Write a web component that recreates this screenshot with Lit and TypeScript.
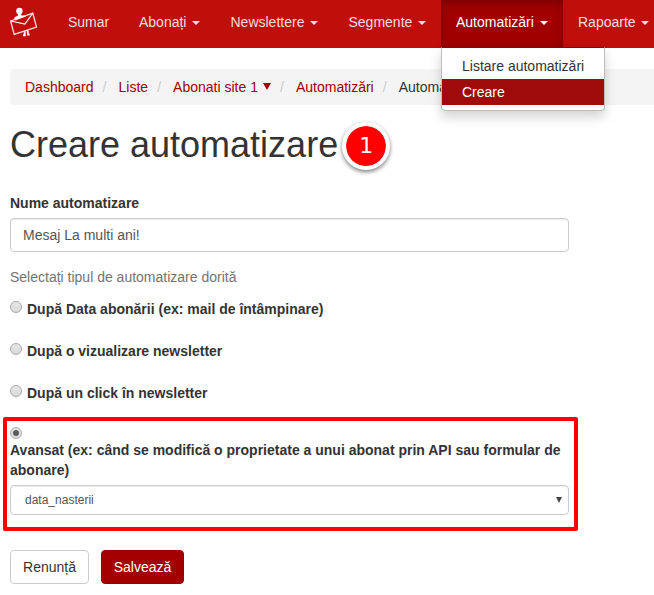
import { LitElement, html, css, svg } from "lit";
import { customElement, property } from "lit/decorators.js";

interface NavItem {
  label: string;
  menu?: string[];
  open?: boolean;
  width: number;
}

const NAV: NavItem[] = [
  { label: "Sumar", width: 71 },
  { label: "Abonați", menu: [], width: 91.5 },
  { label: "Newslettere", menu: [], width: 118 },
  { label: "Segmente", menu: [], width: 107.5 },
  { label: "Automatizări", menu: ["Listare automatizări", "Creare"], open: true, width: 122 },
  { label: "Rapoarte", menu: [], width: 102 },
];

@customElement("brand-logo")
class BrandLogo extends LitElement {
  static styles = css`
    :host { display: block; width: 30px; height: 30px; }
    svg { display: block; }
  `;
  render() {
    return html`<svg width="30" height="30" viewBox="0 0 30 30" fill="none" stroke="#fff">
      ${svg`
        <path d="M1.600 14 23.800 6.200 27.500 20 5.200 27.300Z" stroke-width="1.300" stroke-opacity=".88"/>
        <path d="M1.800 14 15.900 17.100 23.700 6.300" stroke-width="1.100"/>
        <circle cx="10.400" cy="4" r="3.200" fill="#fff" stroke="none"/>
        <path d="M8.900 6h3.200l.3 2.400 4 .2v1.200L6 13.400 5.200 11c1-1.700 2.900-1.500 3.700-2.500Z" fill="#fff" stroke="none"/>
        <path d="M15.700 24.300v3.900h-1.800M18.600 23.500l.4 4h1.600" stroke-width="1.900"/>
      `}
    </svg>`;
  }
}

@customElement("nav-bar")
class NavBar extends LitElement {
  static styles = css`
    :host { display: flex; height: 48px; background: #bf0e0c; padding-left: 9px; box-sizing: border-box; }
    brand-logo { margin: 7px 5px 0 0; flex: none; }
    .bar { display: flex; flex: none; padding-left: 9px; }
    .item { position: relative; flex: none; box-sizing: border-box; height: 48px; padding-left: 15px; line-height: 44px; color: #f0dede; white-space: nowrap; }
    .item.open { background: #a00000; color: #fff; box-shadow: inset 0 3px 9px rgba(0, 0, 0, 0.25); }
    .caret { display: inline-block; vertical-align: middle; margin-left: 2px; border: 4px solid transparent; border-top-color: currentColor; border-bottom: 0; }
    .menu { position: absolute; z-index: 2; top: 47px; left: 0; width: 164px; height: 64px; box-sizing: border-box; padding: 5px 0; background: #fff; border: 1px solid #bdbdbd; border-top-color: #930000; border-radius: 0 0 4px 4px; box-shadow: 0 6px 12px rgba(0, 0, 0, 0.175); line-height: 20px; color: #333; }
    .entry { padding: 3px 20px; }
    .entry.current { background: #9f0b0a; color: #fff; }
  `;
  render() {
    return html`
      <brand-logo></brand-logo>
      <div class="bar">
        ${NAV.map((n) => html`
          <div class="item ${n.open ? "open" : ""}" style="width:${n.width}px">${n.label}${n.menu ? html` <span class="caret"></span>` : ""}${n.open
            ? html`<div class="menu">${n.menu!.map((m) => html`<div class="entry ${m === "Creare" ? "current" : ""}">${m}</div>`)}</div>`
            : ""}</div>`)}
      </div>`;
  }
}

@customElement("radio-dot")
class RadioDot extends LitElement {
  @property({ type: Boolean }) on = false;
  static styles = css`
    :host { display: block; flex: none; width: 12px; height: 12px; }
    .dot { display: flex; align-items: center; justify-content: center; box-sizing: border-box; width: 12px; height: 12px; border: 1px solid #a9a9a9; border-radius: 50%; background: linear-gradient(#e6e6e6, #dadada); }
    .mark { width: 6px; height: 6px; border-radius: 50%; background: #5c5c5c; }
  `;
  render() {
    return html`<div class="dot">${this.on ? html`<div class="mark"></div>` : ""}</div>`;
  }
}

@customElement("app-root")
class AppRoot extends LitElement {
  static styles = css`
    :host { display: block; width: 654px; height: 595px; overflow: hidden; background: #fff; color: #333; font: 14px/20px "Liberation Sans", Arial, sans-serif; }
    .crumbs { display: flex; align-items: center; height: 36px; margin: 21px 0 0 10px; padding-left: 15px; box-sizing: border-box; background: #f4f4f4; border-radius: 4px 0 0 4px; white-space: nowrap; color: #a00000; }
    .sep { color: #ccc; width: 25px; text-align: center; box-sizing: border-box; padding-right: 3px; flex: none; }
    .here { color: #333; }
    .tri { width: 0; border: 4.5px solid transparent; border-top: 7px solid #a00000; border-bottom: 0; margin: 0 0 1px 5px; }
    .main { padding-left: 10px; }
    .title { display: flex; align-items: center; height: 50px; margin-top: 16px; }
    h1 { margin: 0; font-size: 36px; line-height: 40px; font-weight: 400; white-space: nowrap; padding-bottom: 2px; }
    .badge { display: flex; align-items: center; justify-content: center; box-sizing: border-box; width: 48px; height: 48px; margin: 0 0 0 4px; border: 4px solid #fff; border-radius: 50%; background: #f00; background-clip: padding-box; box-shadow: 0 2px 4px rgba(0, 0, 0, 0.5); color: #fff; font: 22px/37px "DejaVu Sans", sans-serif; padding-bottom: 2px; }
    .label { font-weight: 700; }
    .name { margin-top: 22px; }
    .field { box-sizing: border-box; width: 559px; border: 1px solid #ccc; border-radius: 4px; box-shadow: inset 0 1px 1px rgba(0, 0, 0, 0.075); color: #555; display: flex; align-items: center; }
    .text { height: 34px; margin-top: 5px; padding: 0 12px; }
    .help { margin-top: 15px; color: #737373; }
    .choice { display: flex; height: 20px; gap: 5px; margin-bottom: 22px; }
    .choices { margin-top: 12px; }
    .choice radio-dot { margin-top: 2px; }
    .marked { box-sizing: border-box; width: 575px; height: 114px; margin: -8px 0 0 -7px; border: 4px solid #f00; border-radius: 2px; padding: 6px 0 0 3px; }
    .marked .label { width: 559px; margin-top: 1px; }
    .select { height: 30px; margin-top: 5px; padding: 0 6px 0 14px; font-size: 12px; justify-content: space-between; }
    .arrow { width: 0; border: 3px solid transparent; border-top: 6px solid #444; border-bottom: 0; }
    .actions { display: flex; gap: 12px; margin-top: 19px; }
    .btn { box-sizing: border-box; height: 34px; border: 1px solid #ccc; border-radius: 4px; line-height: 32px; text-align: center; width: 79px; }
    .btn.primary { width: 83px; color: #fff; background: #a50000; border-color: #960000; }
  `;
  render() {
    return html`
      <nav-bar></nav-bar>
      <div class="crumbs">
        <span>Dashboard</span><span class="sep">/</span><span>Liste</span><span class="sep">/</span>
        <span>Abonati site 1</span><span class="tri"></span><span class="sep">/</span>
        <span>Automatizări</span><span class="sep">/</span><span class="here">Automatizare</span>
      </div>
      <div class="main">
        <div class="title"><h1>Creare automatizare</h1><div class="badge">1</div></div>
        <div class="label name">Nume automatizare</div>
        <div class="field text">Mesaj La multi ani!</div>
        <div class="help">Selectați tipul de automatizare dorită</div>
        <div class="choices">
          ${["După Data abonării (ex: mail de întâmpinare)", "După o vizualizare newsletter", "După un click în newsletter"].map(
            (t) => html`<div class="choice"><radio-dot></radio-dot><span class="label">${t}</span></div>`)}
        </div>
        <div class="marked">
          <radio-dot on></radio-dot>
          <div class="label">Avansat (ex: când se modifică o proprietate a unui abonat prin API sau formular de abonare)</div>
          <div class="field select"><span>data_nasterii</span><span class="arrow"></span></div>
        </div>
        <div class="actions"><div class="btn">Renunță</div><div class="btn primary">Salvează</div></div>
      </div>`;
  }
}
